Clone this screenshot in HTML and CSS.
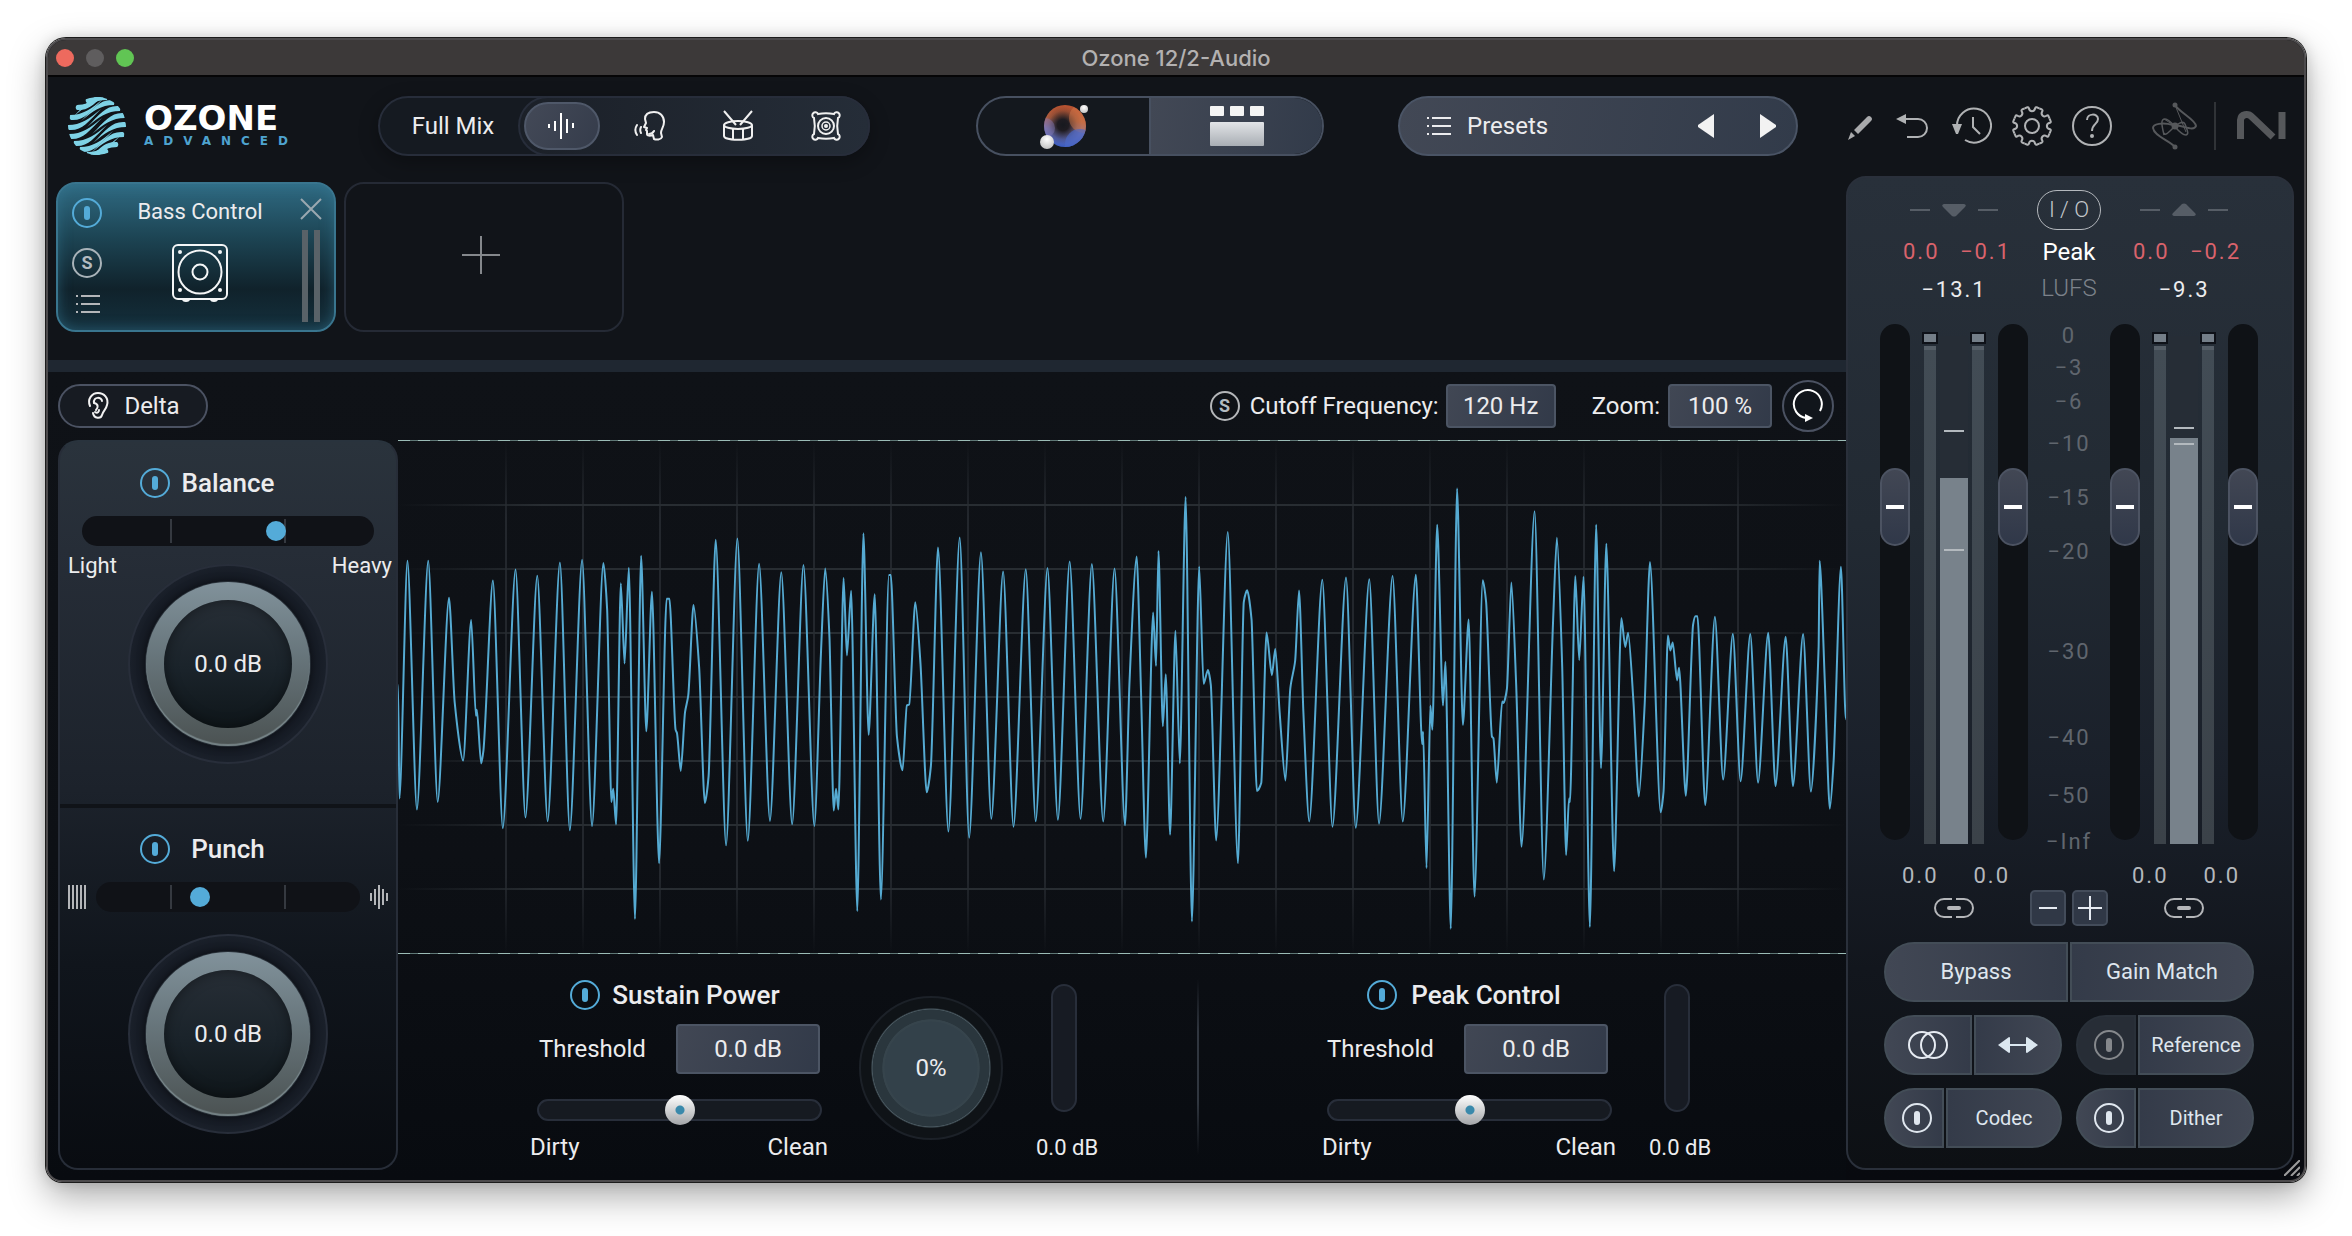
FILE: index.html
```html
<!DOCTYPE html>
<html lang="en">
<head>
<meta charset="utf-8">
<title>Ozone 12/2-Audio</title>
<link rel="stylesheet" href="styles.css">
</head>
<body>
<svg class="defs" aria-hidden="true">
  <symbol id="i-power" viewBox="0 0 30 30"><circle cx="15" cy="15" r="14" fill="none" stroke="currentColor" stroke-width="2"/><rect x="12" y="8" width="6" height="14" rx="3" fill="currentColor"/></symbol>
  <symbol id="i-list" viewBox="0 0 24 20"><path d="M0 2h2M5 2h19M0 10h2M5 10h19M0 18h2M5 18h19" fill="none" stroke="currentColor" stroke-width="2"/></symbol>
  <symbol id="i-link" viewBox="0 0 40 20"><path d="M18 1h-8a9 9 0 0 0 0 18h8M22 1h8a9 9 0 0 1 0 18h-8" fill="none" stroke="currentColor" stroke-width="2"/><rect x="13" y="8" width="14" height="4" rx="2" fill="currentColor"/></symbol>
</svg>

<div class="window">
  <div class="titlebar">
    <div class="lights"><button class="light red" aria-label="Close"></button><button class="light grey" aria-label="Minimise"></button><button class="light green" aria-label="Zoom window"></button></div>
    <div class="title">Ozone 12/2-Audio</div>
  </div>

  <header class="header">
    <div class="brand">
      <svg width="58" height="58" viewBox="0 0 58 58" aria-hidden="true">
        <defs>
          <linearGradient id="og" x1="0" y1="0" x2="0" y2="58" gradientUnits="userSpaceOnUse"><stop offset="0" stop-color="#7fd3e6"/><stop offset="1" stop-color="#4a9fd0"/></linearGradient>
          <clipPath id="oc"><circle cx="29" cy="29" r="29"/></clipPath>
          <path id="ow" d="M0 -1Q-1 3 1 4C14 5 20 -4 33 -17C21 -7 13 -1 0 -1Z"/>
          <g id="oh"><use href="#ow" x="18" y="2"/><use href="#ow" x="8" y="9"/><use href="#ow" x="2" y="19"/><use href="#ow" x="0" y="29"/><use href="#ow" x="1" y="38"/><use href="#ow" x="6" y="45"/><use href="#ow" x="12" y="51"/><use href="#ow" x="19" y="56"/></g>
        </defs>
        <g clip-path="url(#oc)" fill="url(#og)"><use href="#oh"/><use href="#oh" transform="rotate(180 29 29)"/></g>
      </svg>
      <div class="brand-text"><span class="brand-name">OZONE</span><span class="brand-tier">ADVANCED</span></div>
    </div>

    <nav class="sources" aria-label="Source">
      <button class="full-mix">Full Mix</button>
      <div class="source-icons">
        <button class="source active" aria-label="Mix"><svg width="32" height="28" viewBox="0 0 32 28"><path d="M3 12v4M9 9v10M15 1v26M21 7v14M27 11v5" stroke="#fff" stroke-width="2"/></svg></button>
        <button class="source" aria-label="Vocals"><svg width="32" height="32" viewBox="0 0 32 32" fill="none" stroke="#f0f0f0" stroke-width="2" stroke-linejoin="round" stroke-linecap="round"><path d="M11 9C11 4 15 2 20 2c6 0 10 4 10 10 0 5-3 7-3 11l1 4c-1 3-6 3-8 2l-1-4c-3 1-6 1-6-1v-3l-1-1 1-2-3-1 2-4Z"/><path d="M15 24c2 0 4-1 5-3M7 17c-1 2-1 4 0 6M3 15c-2 3-2 7 0 10"/></svg></button>
        <button class="source" aria-label="Drums"><svg width="32" height="32" viewBox="0 0 32 32" fill="none" stroke="#f0f0f0" stroke-width="2"><ellipse cx="16" cy="15" rx="14" ry="4"/><path d="M2 15v11c0 5 28 5 28 0V15M11 19v10M21 19v10M2 1l12 14M30 1L18 15"/></svg></button>
        <button class="source" aria-label="Bass"><svg width="32" height="32" viewBox="0 0 32 32" fill="none" stroke="#f0f0f0" stroke-width="2"><path d="M8 4c5-1 11-1 16 0a3 3 0 1 1 4 4c-1 5-1 11 0 16a3 3 0 1 1-4 4c-5 1-11 1-16 0a3 3 0 1 1-4-4c1-5 1-11 0-16a3 3 0 1 1 4-4Z"/><ellipse cx="16" cy="16" rx="8" ry="8"/><circle cx="16" cy="16" r="4" stroke-width="1.5"/><circle cx="16" cy="16" r="2" fill="#f0f0f0" stroke="none"/></svg></button>
      </div>
    </nav>

    <div class="views">
      <button class="view" aria-label="Assistant view"><svg width="52" height="48" viewBox="0 0 52 48">
        <defs>
          <radialGradient id="orb" cx=".5" cy=".5" r=".5"><stop offset="0" stop-color="#17191f"/><stop offset=".3" stop-color="#1f1c22"/><stop offset=".75" stop-color="#17191f" stop-opacity=".2"/><stop offset="1" stop-color="#17191f" stop-opacity="0"/></radialGradient>
          <linearGradient id="orbc" x1=".6" y1="0" x2=".45" y2="1"><stop offset="0" stop-color="#b5502f"/><stop offset=".35" stop-color="#b8603f"/><stop offset=".62" stop-color="#7a72a8"/><stop offset="1" stop-color="#3a5cc0"/></linearGradient>
          <radialGradient id="ball" cx=".5" cy=".3" r=".8"><stop offset="0" stop-color="#fff"/><stop offset="1" stop-color="#bbb"/></radialGradient>
          <clipPath id="orbclip"><circle cx="27" cy="24" r="21"/></clipPath>
        </defs>
        <circle cx="27" cy="24" r="21" fill="url(#orbc)"/><circle cx="25" cy="23" r="19" fill="url(#orb)"/>
        <g clip-path="url(#orbclip)"><circle cx="46" cy="16" r="15" fill="#d87c4c" opacity=".45"/><circle cx="42" cy="42" r="15" fill="#4a68c8" opacity=".65"/><circle cx="7" cy="26" r="10" fill="#8a80c0" opacity=".4"/></g>
        <circle cx="46" cy="7" r="4" fill="url(#ball)"/><circle cx="9" cy="40" r="7" fill="url(#ball)"/></svg></button>
      <button class="view active" aria-label="Module view"><svg width="54" height="40" viewBox="0 0 54 40"><defs><linearGradient id="blk" x2="0" y2="1"><stop stop-color="#e2e4e7"/><stop offset="1" stop-color="#a9aeb4"/></linearGradient></defs><g fill="#f4f4f4"><rect width="14" height="10" rx="1"/><rect x="20" width="14" height="10" rx="1"/><rect x="40" width="14" height="10" rx="1"/></g><rect y="16" width="54" height="24" rx="1" fill="url(#blk)"/></svg></button>
    </div>

    <div class="presets">
      <button class="preset-name"><svg width="24" height="20"><use href="#i-list"/></svg>Presets</button>
      <button class="bare" aria-label="Previous preset"><svg width="18" height="24" viewBox="0 0 18 24"><path d="M17 0v24L1 13v-2Z" fill="#f2f2f2"/></svg></button>
      <button class="bare" aria-label="Next preset"><svg width="18" height="24" viewBox="0 0 18 24"><path d="M1 0v24l16-11v-2Z" fill="#f2f2f2"/></svg></button>
    </div>

    <div class="tools">
      <button class="bare" aria-label="Edit"><svg width="24" height="40" viewBox="0 0 24 40"><path d="M6 24L19 11q2-2 4 0t0 4L10 28ZM3 26l4 4-7 4Z" fill="#a9aaac"/></svg></button>
      <button class="bare" aria-label="Undo"><svg width="40" height="40" viewBox="0 0 40 40"><path d="M12 13h14a9 9 0 0 1 0 18H15" fill="none" stroke="#b0b2b4" stroke-width="2"/><path d="M4 13l10-5v10Z" fill="#b0b2b4"/></svg></button>
      <button class="bare" aria-label="History"><svg width="40" height="40" viewBox="0 0 40 40"><path d="M5 20A17 17 0 1 1 13 34M21 11v10l7 7" fill="none" stroke="#b0b2b4" stroke-width="2"/><path d="M0 18h10l-4 10h-2Z" fill="#b0b2b4"/></svg></button>
      <button class="bare" aria-label="Settings"><svg width="40" height="40" viewBox="0 0 40 40" fill="none" stroke="#b0b2b4" stroke-width="2" stroke-linejoin="round"><defs><path id="notch" d="M-7.3 -17.6L-4.6 -18.7Q-3.6 -19 -3.2 -18C-2.4 -13.8 2.4 -13.8 3.2 -18Q3.6 -19 4.6 -18.7L7.3 -17.6"/></defs><g transform="translate(20 20)"><use href="#notch"/><use href="#notch" transform="rotate(45)"/><use href="#notch" transform="rotate(90)"/><use href="#notch" transform="rotate(135)"/><use href="#notch" transform="rotate(180)"/><use href="#notch" transform="rotate(225)"/><use href="#notch" transform="rotate(270)"/><use href="#notch" transform="rotate(315)"/><circle r="7"/></g></svg></button>
      <button class="bare" aria-label="Help"><svg width="40" height="40" viewBox="0 0 40 40"><g fill="none" stroke="#b0b2b4" stroke-width="2"><circle cx="20" cy="20" r="19"/><path d="M15 14c0-7 11-7 11-1 0 5-6 5-6 12"/></g><circle cx="20" cy="30" r="2" fill="#b0b2b4"/></svg></button>
      <svg class="izotope" width="46" height="48" viewBox="0 0 46 48" fill="none" stroke="#56585b" stroke-width="2"><path d="M23 3C27 10 44 18 44 24C42 30 30 23 21 23C10 20 1 22 1 26C2 34 17 38 23 45"/><path d="M12 33C10 24 8 17 13 17C20 17 26 33 34 33C38 32 34 26 33 22C31 18 25 22 20 27C16 31 13 34 12 31" stroke-width="1.5"/><path d="M23 3L34 30M12 17L23 24" stroke-width="1"/><g fill="#56585b" stroke="none"><circle cx="23" cy="3" r="2.5"/><circle cx="23" cy="24" r="3.5"/><circle cx="23" cy="45" r="2.5"/></g></svg>
      <span class="rule"></span>
      <svg class="ni" width="50" height="30" viewBox="0 0 50 30"><g fill="none" stroke="#56585b" stroke-width="7"><path d="M4.500 28V9C5 3 12 2 16 6L37 26"/><path d="M46 1v27"/></g></svg>
    </div>
  </header>

  <main class="main">
    <section class="left">
      <div class="chain">
        <article class="module">
          <div class="module-side">
            <button class="bare blue" aria-label="Bass Control power"><svg width="30" height="30"><use href="#i-power"/></svg></button>
            <button class="solo" aria-label="Solo">S</button>
            <button class="bare" aria-label="Module presets"><svg width="24" height="20"><use href="#i-list"/></svg></button>
          </div>
          <div class="module-mid"><span>Bass Control</span>
            <svg width="56" height="58" viewBox="0 0 56 58" fill="none" stroke="#f4f6f7" stroke-width="2"><rect x="1" y="1" width="54" height="54" rx="5"/><circle cx="28" cy="28" r="21.500"/><circle cx="28" cy="28" r="7.500"/><g fill="#f4f6f7" stroke="none"><circle cx="8" cy="8" r="2"/><circle cx="48" cy="8" r="2"/><circle cx="8" cy="46" r="2"/><circle cx="48" cy="46" r="2"/><path d="M10 55h8q0 3-4 3t-4-3ZM38 55h8q0 3-4 3t-4-3Z"/></g></svg>
          </div>
          <div class="module-end">
            <button class="bare" aria-label="Remove module"><svg width="22" height="22" viewBox="0 0 22 22"><path d="M1 1l20 20M21 1L1 21" stroke="#9aa8b0" stroke-width="2"/></svg></button>
            <div class="mini-meters"><i></i><i></i></div>
          </div>
        </article>
        <button class="add" aria-label="Add module"><svg width="38" height="38" viewBox="0 0 38 38"><path d="M19 0v38M0 19h38" stroke="#85888c" stroke-width="2"/></svg></button>
      </div>

      <div class="editor">
        <div class="toolbar">
          <button class="delta"><svg width="24" height="28" viewBox="0 0 24 28" fill="none" stroke="#f2f2f2" stroke-width="2" stroke-linecap="round"><path d="M4 14C1 7 6 1 12 1s11 5 9 12c-1 5-4 6-5 10s-8 4-9-2"/><path d="M8 11c-1-7 8-6 8-2M8 11c5 1 4 5 2 7M9 20c3 2 4-1 4-2"/></svg>Delta</button>
          <div class="toolbar-right">
            <button class="solo small" aria-label="Solo below cutoff">S</button>
            <label for="cutoff">Cutoff Frequency:</label><input id="cutoff" class="field cutoff" type="text" value="120 Hz">
            <label for="zoom" class="zoom-label">Zoom:</label><input id="zoom" class="field zoom" type="text" value="100 %">
            <button class="reset" aria-label="Reset"><svg width="32" height="34" viewBox="0 0 32 34"><path d="M28 22A14 14 0 1 0 14 29" fill="none" stroke="#fff" stroke-width="2"/><path d="M13 25l8 4-8 4Z" fill="#fff"/></svg></button>
          </div>
        </div>

        <div class="body">
          <aside class="side">
            <section class="band">
              <div class="band-head"><button class="bare blue" aria-label="Balance power"><svg width="30" height="30"><use href="#i-power"/></svg></button><h2>Balance</h2></div>
              <input class="bar balance" type="range" min="0" max="1000" value="676" aria-label="Balance">
              <div class="ends"><span>Light</span><span>Heavy</span></div>
              <button class="knob big" aria-label="Balance amount">0.0 dB</button>
            </section>
            <section class="band punch">
              <div class="band-head"><button class="bare blue" aria-label="Punch power"><svg width="30" height="30"><use href="#i-power"/></svg></button><h2>Punch</h2></div>
              <div class="punch-row">
                <svg width="18" height="24" viewBox="0 0 18 24"><path d="M1 0v24M5 0v24M9 0v24M13 0v24M17 0v24" stroke="#b4b6b9" stroke-width="2"/></svg>
                <input class="bar shape" type="range" min="0" max="1000" value="385" aria-label="Punch">
                <svg width="18" height="24" viewBox="0 0 18 24"><path d="M1 8v8M5 4v16M9 0v24M13 4v16M17 8v8" stroke="#b4b6b9" stroke-width="2"/></svg>
              </div>
              <button class="knob big" aria-label="Punch amount">0.0 dB</button>
            </section>
          </aside>

          <div class="stage">
            <svg class="graph" viewBox="0 0 1448 514" preserveAspectRatio="none" role="img" aria-label="Waveform">
              <defs>
                <linearGradient id="fv" x1="0" y1="0" x2="0" y2="514" gradientUnits="userSpaceOnUse"><stop offset="0" stop-color="#23272d" stop-opacity="0"/><stop offset=".15" stop-color="#23272d"/><stop offset=".85" stop-color="#23272d"/><stop offset="1" stop-color="#23272d" stop-opacity="0"/></linearGradient>
                <linearGradient id="fh" x1="0" y1="0" x2="1448" y2="0" gradientUnits="userSpaceOnUse"><stop offset="0" stop-color="#282d32" stop-opacity="0"/><stop offset=".1" stop-color="#282d32"/><stop offset=".9" stop-color="#282d32"/><stop offset="1" stop-color="#282d32" stop-opacity="0"/></linearGradient>
              </defs>
              <g id="grid"></g>
              <path id="wave" class="wave"/>
              <path d="M0 .5H1448M0 513.500H1448" stroke="#5f7876"/>
              <path d="M0 .5H1448M0 513.500H1448" stroke="#9bbcb6" stroke-dasharray="12 8"/>
            </svg>

            <div class="controls">
              <section class="control sustain">
                <div class="control-main">
                  <div class="control-head"><button class="bare blue" aria-label="Sustain Power on"><svg width="30" height="30"><use href="#i-power"/></svg></button><h2>Sustain Power</h2></div>
                  <div class="threshold"><label for="th1">Threshold</label><input id="th1" class="field" type="text" value="0.0 dB"></div>
                  <input class="tone" type="range" value="50" aria-label="Sustain tone">
                  <div class="tone-ends"><span>Dirty</span><span>Clean</span></div>
                </div>
                <button class="knob small-knob" aria-label="Sustain amount">0%</button>
                <div class="reduction"><div class="tube"></div><span>0.0 dB</span></div>
              </section>
              <section class="control peak">
                <div class="control-main">
                  <div class="control-head"><button class="bare blue" aria-label="Peak Control on"><svg width="30" height="30"><use href="#i-power"/></svg></button><h2>Peak Control</h2></div>
                  <div class="threshold"><label for="th2">Threshold</label><input id="th2" class="field" type="text" value="0.0 dB"></div>
                  <input class="tone" type="range" value="50" aria-label="Peak tone">
                  <div class="tone-ends"><span>Dirty</span><span>Clean</span></div>
                </div>
                <div class="reduction"><div class="tube"></div><span>0.0 dB</span></div>
              </section>
            </div>
          </div>
        </div>
      </div>
    </section>

    <aside class="io">
      <div class="io-row io-top">
        <svg width="88" height="14" viewBox="0 0 88 14" fill="#565d66"><path d="M0 6h20v2H0ZM68 6h20v2H68ZM34 1h20q3 1 1 3l-9 9q-2 1-4 0l-9-9q-2-2 1-3Z"/></svg>
        <button class="io-button">I / O</button>
        <svg width="88" height="14" viewBox="0 0 88 14" fill="#565d66"><path d="M0 6h20v2H0ZM68 6h20v2H68ZM34 13h20q3-1 1-3l-9-9q-2-1-4 0l-9 9q-2 2 1 3Z"/></svg>
      </div>
      <div class="io-row io-peak"><div class="pair"><span>0.0</span><span>−0.1</span></div><b>Peak</b><div class="pair"><span>0.0</span><span>−0.2</span></div></div>
      <div class="io-row io-lufs"><span class="lufs">−13.1</span><span class="unit">LUFS</span><span class="lufs">−9.3</span></div>
      <div class="io-row io-meters">
        <div class="strip">
          <input class="fader" type="range" min="0" max="1000" value="671" aria-label="Input left gain">
          <div class="side-meter"><i></i><b></b></div>
          <div class="level"><div class="fill" style="height:72%"></div><i style="top:18.5%"></i><i style="top:42%"></i></div>
          <div class="side-meter"><i></i><b></b></div>
          <input class="fader" type="range" min="0" max="1000" value="671" aria-label="Input right gain">
        </div>
        <div class="scale"><span>0</span><span>−3</span><span>−6</span><span>−10</span><span>−15</span><span>−20</span><span>−30</span><span>−40</span><span>−50</span><span>−Inf</span></div>
        <div class="strip">
          <input class="fader" type="range" min="0" max="1000" value="671" aria-label="Output left gain">
          <div class="side-meter"><i></i><b></b></div>
          <div class="level"><div class="fill" style="height:80%"></div><i style="top:18%"></i><i style="top:21%"></i></div>
          <div class="side-meter"><i></i><b></b></div>
          <input class="fader" type="range" min="0" max="1000" value="671" aria-label="Output right gain">
        </div>
      </div>
      <div class="io-row io-gain"><div class="pair"><span>0.0</span><span>0.0</span></div><span></span><div class="pair"><span>0.0</span><span>0.0</span></div></div>
      <div class="io-row io-link">
        <button class="bare" aria-label="Link input"><svg width="40" height="20"><use href="#i-link"/></svg></button>
        <div class="steps"><button aria-label="Zoom out"><svg width="24" height="24" viewBox="0 0 24 24"><path d="M3 12h18" stroke="#e6ebf2" stroke-width="2"/></svg></button><button aria-label="Zoom in"><svg width="24" height="24" viewBox="0 0 24 24"><path d="M0 12h24M12 0v24" stroke="#e6ebf2" stroke-width="2"/></svg></button></div>
        <button class="bare" aria-label="Link output"><svg width="40" height="20"><use href="#i-link"/></svg></button>
      </div>
      <div class="options">
        <div class="split wide"><button>Bypass</button><button>Gain Match</button></div>
        <div class="split even"><button aria-label="Mono"><svg width="40" height="28" viewBox="0 0 40 28" fill="none" stroke="#e6ebf2" stroke-width="2"><circle cx="14" cy="14" r="13"/><circle cx="26" cy="14" r="13"/></svg></button><button aria-label="Swap channels"><svg width="40" height="16" viewBox="0 0 40 16" fill="#dbe7f0"><path d="M0 8L11 0q1 0 1 1v6h16V1q0-1 1-1l11 8-11 8q-1 0-1-1V9H12v6q0 1-1 1Z"/></svg></button></div>
        <div class="split small-left"><button class="off" aria-label="Reference power"><svg width="30" height="30"><use href="#i-power"/></svg></button><button>Reference</button></div>
        <div class="split small-left"><button aria-label="Codec power"><svg width="30" height="30"><use href="#i-power"/></svg></button><button>Codec</button></div>
        <div class="split small-left"><button aria-label="Dither power"><svg width="30" height="30"><use href="#i-power"/></svg></button><button>Dither</button></div>
      </div>
    </aside>
  </main>
  <svg class="grip" width="16" height="16" viewBox="0 0 16 16" aria-hidden="true"><path d="M0 16L16 0M7 16l9-9M13 16l3-3" stroke="#9c9c9c" stroke-width="2"/></svg>
</div>
<script src="waveform.js"></script>
</body>
</html>
```
FILE: styles.css
```css
* { box-sizing: border-box; }
body { margin: 0; padding: 38px 46px 54px; background: #fff; color: #ececee; font: 24px/28px Roboto, "Liberation Sans", sans-serif; min-height: 100vh; display: flex; }
button, input { font: inherit; color: inherit; margin: 0; }
button { background: none; border: 0; padding: 0; display: flex; align-items: center; justify-content: center; cursor: pointer; }
svg { display: block; flex: none; }
h2 { margin: 0; font-size: 26px; line-height: 30px; font-weight: 500; }
.defs { position: absolute; width: 0; height: 0; }
.bare { color: #b4b6b9; }
.blue { color: #54abd8; }

.window { flex: 1; min-width: 0; display: flex; flex-direction: column; position: relative; border: 2px solid #4c4a4c; border-radius: 20px 20px 16px 16px; overflow: hidden; background: linear-gradient(#111419 30%, #080a0f); box-shadow: 0 0 0 1px #1c1c1c, 0 14px 36px rgba(0, 0, 0, .34), 0 0 14px rgba(0, 0, 0, .14); }
.titlebar { height: 37px; display: grid; grid-template-columns: 1fr auto 1fr; align-items: center; padding: 0 8px; background: #3c3939; border-bottom: 2px solid #050506; }
.lights { display: flex; gap: 12px; }
.light { width: 18px; height: 18px; border-radius: 50%; }
.red { background: #ed6a5e; }
.grey { background: #5f5d5e; }
.green { background: #61c554; }
.title { font: 500 22px/26px Inter, sans-serif; color: #b3b1b1; }

.header { display: flex; align-items: flex-start; padding: 19px 18px 20px 20px; height: 99px; }
.brand { display: flex; gap: 18px; width: 310px; align-items: center; height: 60px; flex: none; }
.brand-text { display: flex; flex-direction: column; gap: 2px; }
.brand-name { font: bold 34px/28px "DejaVu Sans", sans-serif; color: #fff; }
.brand-tier { font: bold 12px/14px "DejaVu Sans", sans-serif; color: #4ea3cf; letter-spacing: 10px; }
.sources { width: 492px; height: 60px; flex: none; display: flex; border: 2px solid #272d3a; border-radius: 30px; background: #151a21; box-shadow: 0 6px 20px rgba(0, 0, 0, .3); }
.full-mix { flex: 1; padding-left: 6px; }
.source-icons { width: 352px; margin: -2px; display: flex; gap: 12px; border: 2px solid #272d3a; border-radius: 30px; background: linear-gradient(90deg, #1b2028, #252d38); padding: 4px; }
.source { width: 76px; height: 48px; border-radius: 24px; border: 2px solid transparent; }
.source.active { border-color: #4f5869; background: linear-gradient(120deg, #434957, #353c4b); }
.views { width: 348px; height: 60px; margin-left: 106px; flex: none; display: flex; border: 2px solid #475060; border-radius: 30px; overflow: hidden; background: #14181e; }
.view { flex: 1; }
.view.active { border-left: 2px solid #475060; background: linear-gradient(100deg, #424855, #323b4a); }
.presets { width: 400px; height: 60px; margin-left: 74px; flex: none; display: flex; align-items: center; padding: 0 19px 0 27px; border: 2px solid #4a5465; border-radius: 30px; background: linear-gradient(100deg, #424855, #323b4a); }
.preset-name { gap: 16px; margin-right: auto; }
.presets .bare + .bare { margin-left: 44px; }
.tools { margin-left: auto; height: 60px; display: flex; align-items: center; gap: 20px; }
.izotope { margin-left: 20px; }
.rule { width: 2px; height: 48px; background: #303337; margin-left: -4px; }

.main { flex: 1; display: grid; grid-template-columns: minmax(0, 1fr) 448px; padding-right: 10px; }
.left { display: flex; flex-direction: column; min-width: 0; }
.chain { display: flex; gap: 8px; padding: 6px 8px 28px; }
.module, .add { width: 280px; height: 150px; border-radius: 20px; }
.module { display: grid; grid-template-columns: 30px 1fr 22px; padding: 14px 12px 8px 14px; border: 2px solid #39758e; background: linear-gradient(#2f6a82, #1c4352 38%, #10222b 72%, #14303d); box-shadow: inset 0 0 14px rgba(58, 128, 158, .5); }
.module-side { display: flex; flex-direction: column; align-items: center; gap: 20px; }
.module-side .bare:last-child { margin-top: -4px; padding-left: 2px; }
.module-mid { display: flex; flex-direction: column; align-items: center; gap: 18px; padding-right: 2px; font-size: 22px; }
.solo { width: 30px; height: 30px; border: 2px solid #a9b3b9; border-radius: 50%; color: #b3bbc0; font-size: 18px; line-height: 20px; font-weight: 700; }
.module-end { display: flex; flex-direction: column; gap: 10px; }
.mini-meters { flex: 1; display: flex; gap: 6px; padding: 0 2px; }
.mini-meters i { width: 6px; background: #596268; }
.add { border: 2px solid #252a35; padding: 0 6px 4px 0; }

.editor { flex: 1; display: flex; flex-direction: column; border-top: 12px solid #1f2731; background: linear-gradient(#0f1217, #0d1015 60%, #080b10); }
.toolbar { height: 68px; display: flex; align-items: center; justify-content: space-between; padding: 0 12px 0 10px; }
.delta { width: 150px; height: 44px; gap: 14px; border: 2px solid #4b5262; border-radius: 22px; background: #171b22; }
.toolbar-right { display: flex; align-items: center; }
.solo.small { margin-right: 10px; border-color: #b4b6b9; }
.field { width: 144px; height: 50px; padding: 0; text-align: center; border: 2px solid #4c5564; border-radius: 4px; background: linear-gradient(110deg, #414754, #323a49); }
.cutoff { width: 110px; height: 44px; margin: 0 36px 0 7px; }
.zoom { width: 104px; height: 44px; margin: 0 10px 0 8px; }
.reset { width: 52px; height: 52px; border: 2px solid #4b5262; border-radius: 50%; background: #11151b; }

.body { flex: 1; display: grid; grid-template-columns: 340px minmax(0, 1fr); padding-left: 10px; }
.side { margin-bottom: 10px; display: flex; flex-direction: column; border: 2px solid #272d38; border-top-color: #29333d; border-radius: 20px; background: linear-gradient(#2a333c, #262d37 15%, #1c222b 48%, #10151c 72%, #090c11); }
.band { padding: 26px 0 0; height: 362px; display: flex; flex-direction: column; }
.band.punch { flex: 1; height: auto; border-top: 4px solid #101318; }
.band-head { display: grid; grid-template-columns: 30px 1fr 30px; padding: 0 80px; text-align: center; }
.bar { appearance: none; width: 292px; height: 30px; margin: 18px auto 0 22px; border-radius: 15px; background: linear-gradient(#353940, #353940) 30.3% 50% / 2px 24px no-repeat, linear-gradient(#353940, #353940) 69.7% 50% / 2px 24px no-repeat, #101217; }
.bar::-webkit-slider-thumb { appearance: none; width: 20px; height: 20px; border-radius: 50%; background: #54abd8; }
.punch-row { display: flex; align-items: center; justify-content: space-between; padding: 0 8px; margin-top: 18px; }
.bar.shape { width: 264px; margin: 0; background-position: 28.2% 50%, 71.8% 50%, 0 0; }
.ends { display: flex; justify-content: space-between; padding: 0 4px 0 8px; margin-top: 6px; font-size: 22px; }
.knob { border-radius: 50%; }
.big { position: relative; width: 200px; height: 200px; align-self: center; margin-top: -16px; border: 2px solid #282e3a; background: radial-gradient(closest-side, #353f49 84%, #141922 85%, #1a202a 100%); z-index: 0; }
.big::before, .big::after { content: ""; position: absolute; border-radius: 50%; z-index: -1; }
.big::before { inset: 16px; background: linear-gradient(#81929b, #67757b 45%, #4b5252); box-shadow: inset 0 -2px 1px rgba(160, 180, 185, .5), 0 0 8px rgba(0, 0, 0, .5); }
.big::after { inset: 34px; background: linear-gradient(#272e36, #1a232a 55%, #0f161a); box-shadow: inset 0 0 14px rgba(0, 0, 0, .45); }
.punch .big { margin-top: 22px; }

.stage { display: flex; flex-direction: column; min-width: 0; }
.graph { width: 100%; flex: 1 1 514px; min-height: 300px; height: 0; }
.wave { fill: none; stroke: #55aad2; stroke-width: 2; stroke-linejoin: round; }
.controls { display: grid; grid-template-columns: 801fr 647fr; height: 226px; }
.control { display: flex; align-items: flex-start; padding-top: 26px; }
.sustain { padding-left: 132px; background: linear-gradient(transparent, #30363f 30%, #30363f 70%, transparent) 100% 50% / 2px 176px no-repeat; }
.peak { padding-left: 123px; }
.control-main { width: 298px; display: flex; flex-direction: column; }
.peak .control-main { width: 294px; }
.control-head { display: flex; justify-content: center; gap: 12px; padding-right: 8px; }
.peak .control-head { gap: 14px; padding-right: 10px; }
.threshold { display: flex; align-items: center; justify-content: space-between; padding: 0 8px 0 9px; margin-top: 14px; }
.tone { appearance: none; width: 285px; height: 22px; margin: 25px 0 0 7px; border: 2px solid #282e3a; border-radius: 11px; background: #161a21; }
.peak .threshold { padding-left: 5px; }
.peak .tone { margin-left: 5px; }
.tone::-webkit-slider-thumb { appearance: none; width: 30px; height: 30px; border-radius: 50%; background: radial-gradient(circle, #3a89ab 0 4px, transparent 5px), linear-gradient(#fff, #a3a5a8); }
.tone-ends { display: flex; justify-content: space-between; margin-top: 12px; }
.small-knob { width: 144px; height: 144px; margin: 16px 0 0 31px; border: 2px solid #1c2128; background: radial-gradient(closest-side, #33414a 66%, #36444c 67% 69%, #2a363d 70% 83%, #4a5961 84%, #0f1317 86%); }
.reduction { width: 60px; margin: 4px 0 0 33px; display: flex; flex-direction: column; gap: 22px; font-size: 22px; white-space: nowrap; }
.tube { width: 26px; height: 128px; margin-left: 15px; border: 2px solid #282e3a; border-radius: 13px; background: #171b23; }

.io { display: flex; flex-direction: column; margin-bottom: 10px; padding: 12px 34px 20px 32px; border: 2px solid #2a303b; border-radius: 20px; background: linear-gradient(#28303a, #222a33 35%, #1a202a 60%, #12161d 80%, #0d1014); font-size: 22px; }
.io-row { display: grid; grid-template-columns: 148px 1fr 148px; align-items: center; justify-items: center; }
.io-top { height: 40px; }
.io-button { width: 64px; height: 40px; border: 1px solid #b4b8bd; border-radius: 20px; font-weight: 300; color: #c4c8cc; }
.pair { width: 112px; display: flex; justify-content: space-between; letter-spacing: 2px; padding-left: 4px; }
.io-peak { height: 24px; margin-top: 8px; color: #d9636c; }
.io-peak .pair { width: 110px; margin-left: 4px; padding-left: 2px; }
.io-peak b { font-size: 24px; font-weight: 400; color: #fff; }
.io-lufs { margin-top: 14px; height: 28px; }
.lufs, .scale { letter-spacing: 2px; }
.unit { font-size: 24px; line-height: 24px; font-weight: 300; color: #7c828a; align-self: start; }
.io-meters { flex: 1; margin-top: 20px; align-items: stretch; }
.strip { width: 148px; display: grid; grid-template-columns: 44px 14px 34px 26px 30px; }
.fader { appearance: none; writing-mode: vertical-lr; direction: rtl; width: 30px; height: calc(100% - 14px); border-radius: 15px; background: #0f1216; }
.fader::-webkit-slider-thumb { appearance: none; width: 30px; height: 78px; border: 2px solid #4c5362; border-radius: 15px; background: linear-gradient(#fff, #fff) 50% 50% / 18px 4px no-repeat, linear-gradient(#424754, #303849); }
.strip .side-meter { width: 16px; margin: 8px 0 10px -2px; display: flex; flex-direction: column; gap: 2px; }
.side-meter i { height: 12px; background: #747e88; border: 2px solid #0e1118; }
.side-meter b { flex: 1; margin: 0 2px; border-top: 4px solid #555e67; background: linear-gradient(#424c55, #3b4249); }
.level { position: relative; width: 28px; margin: 12px 0 10px 2px; display: flex; align-items: flex-end; background: #262d36; }
.fill { width: 28px; background: #78828b; }
.level i { position: absolute; left: 4px; width: 20px; height: 2px; background: #b3b9be; }
.scale { display: grid; grid-template-rows: 32fr 34fr 42fr 54fr 54fr 100fr 86fr 58fr 46fr 24px; line-height: 24px; text-align: center; color: #60666e; }
.io-gain { margin-top: 8px; height: 24px; color: #b4b8bd; }
.io-link { margin-top: 4px; }
.steps { display: flex; gap: 6px; }
.steps button { width: 36px; height: 36px; border: 2px solid #434c5a; border-radius: 5px; background: #303846; }
.options { display: grid; grid-template-columns: 1fr 1fr; gap: 13px 14px; margin: 16px 4px 0 4px; color: #dfe6ee; }
.split { display: grid; gap: 2px; height: 60px; font-size: 20px; grid-template-columns: 60px 1fr; }
.wide { grid-column: 1 / 3; font-size: 22px; }
.wide, .even { grid-template-columns: 1fr 1fr; }
.split button { border: 2px solid #434d57; background: linear-gradient(90deg, #414754, #343b49); }
.split button:first-child { border-radius: 30px 0 0 30px; }
.split button:last-child { border-radius: 0 30px 30px 0; background: linear-gradient(90deg, #343b49, #414754); }
.small-left button:first-child { padding-left: 6px; }
.split .off { color: #85888c; background: #272d36; border-color: #293039; }
.grip { position: absolute; right: 4px; bottom: 4px; }
```
FILE: waveform.js
```js
// Grid: vertical divisions every 77 units, horizontal every 64.
let grid = "";
for (let x = 107; x < 1400; x += 77) grid += `<rect x="${x}" y="0" width="2" height="514" fill="url(#fv)"/>`;
for (let y = 64; y < 500; y += 64) grid += `<rect x="0" y="${y}" width="1448" height="2" fill="url(#fh)"/>`;
document.getElementById("grid").innerHTML = grid;

// Sample turning points, in two buffers with their own horizontal scale.
const first = "17,740 20,1070 37,380 57,1102 81,380 101,1080 125,487 137,790 155,960 172,552 182,830 184,812 193,968 198,930 218,437 239,1156 266,405 287,1125 312,423 334,1136 360,385 381,1162 407,377 428,1150 452,386 460,520 469,1080 473,1042 479,1145 489,445 497,678 506,400 519,1420 532,365 543,875 555,470 570,1258 586,490 592,490 605,870 608,880 616,990 625,820 632,770 643,508 655,690 667,1083 675,1005 690,319 712,1206 736,315 758,1193 782,388 805,1135 829,413 852,1145 876,392 899,1150 913,650 922,402 931,600 940,1105 945,1042 950,1102 961,430 968,655 977,467 990,1397 1003,300 1014,885 1027,477 1040,1363 1057,421 1061,421 1074,890 1086,988 1095,800 1100,797 1113,500 1124,680 1137,1052 1146,975 1161,341 1183,1166 1207,312 1227,1184 1252,355 1274,1129 1299,411 1321,1152 1347,404 1368,1136 1393,401 1415,1132 1440,382 1463,1129 1487,389 1511,1137 1535,402";
const second = "31,1148 40,740 55,367 64,760 74,1242 89,530 95,685 100,351 109,860 115,709 124,1175 135,583 144,968 156,194 169,1427 184,396 193,737 202,697 208,740 219,1192 243,296 264,1258 276,500 283,465 292,550 303,1048 312,1025 323,588 334,712 341,635 350,820 362,1018 372,750 382,670 390,466 399,820 411,1137 438,435 459,1152 487,428 507,1155 535,433 555,1143 583,424 604,1137 631,420 644,912 646,876 653,1272 661,800 665,870 675,275 687,800 692,673 703,1448 716,170 728,856 740,550 752,1355 769,436 776,500 788,890 791,895 798,1024 809,788 812,793 819,750 828,443 838,740 849,1210 876,236 895,1305 914,560 922,313 933,690 941,1234 947,1070 949,1080 960,424 968,668 977,426 990,1443 1003,275 1013,982 1024,330 1040,1281 1055,546 1063,630 1069,589 1080,790 1091,1064 1103,800 1114,383 1136,1110 1142,1050 1151,597 1156,640 1161,617 1170,727 1174,690 1188,1062 1203,565 1208,541 1212,541 1228,1089 1248,542 1265,1015 1285,592 1301,1020 1321,592 1337,1024 1358,589 1373,1034 1394,600 1409,1034 1430,592 1446,1050 1462,630 1464,380 1475,740 1485,1100 1493,960 1508,397 1518,840";
const parse = (text, sx, ox) => text.split(" ").map(p => {
  const [x, y] = p.split(",").map(Number);
  return [x * sx + ox, y * 0.3444 - 10];
});
const pts = parse(first, 0.472, -8).concat(parse(second, 0.4847, 712));

// Monotone cubic through the points: flat at every turning point.
const slope = i => (pts[i + 1][1] - pts[i][1]) / (pts[i + 1][0] - pts[i][0]);
const tangent = i => {
  if (i === 0 || i === pts.length - 1) return 0;
  const a = slope(i - 1), b = slope(i);
  return a * b <= 0 ? 0 : 2 * a * b / (a + b);
};
let d = `M${pts[0]}`;
for (let i = 0; i < pts.length - 1; i++) {
  const [x0, y0] = pts[i], [x1, y1] = pts[i + 1], h = (x1 - x0) / 4;
  d += `C${x0 + h},${y0 + tangent(i) * h} ${x1 - h},${y1 - tangent(i + 1) * h} ${x1},${y1}`;
}
document.getElementById("wave").setAttribute("d", d);
```
